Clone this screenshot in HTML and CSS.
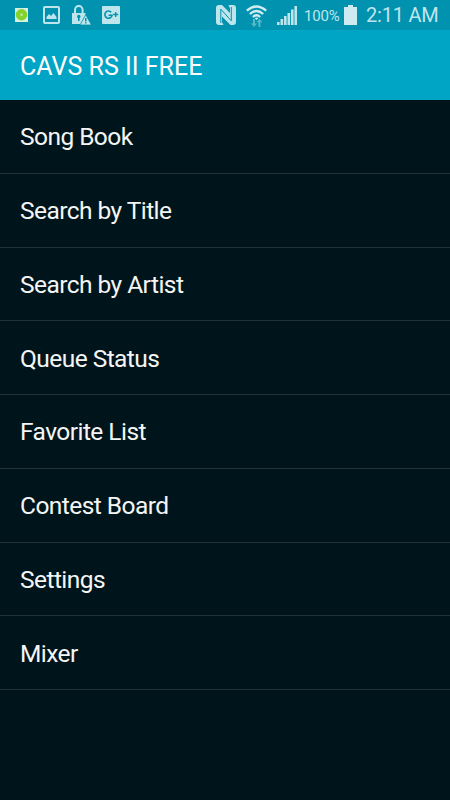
FILE: index.html
```html
<!DOCTYPE html>
<html lang="en">
<head>
  <meta charset="utf-8">
  <meta name="viewport" content="width=device-width, initial-scale=1">
  <title>CAVS RS II FREE</title>
  <link rel="stylesheet" href="styles.css">
</head>
<body>
  <!--status bar-->
  <div class="status-bar">
    <div class="notifications">
      <svg class="icon-app" width="13" height="14" viewBox="0 0 13 14">
        <rect width="13" height="14" fill="#d5f0e0"/>
        <circle cx="6.5" cy="6.7" r="5.7" fill="#84d22c"/>
        <rect x="5.5" y="5.7" width="2" height="2" fill="#d5f0c0"/>
      </svg>
      <svg class="icon-image" width="17" height="18" viewBox="0 0 17 18">
        <rect x="1" y="1" width="15" height="16" rx="1" fill="none" stroke="#bfe5ec" stroke-width="2"/>
        <path d="M3.5 13V11L6 8l2 2 2.5-3 3 4v2z" fill="#bfe5ec"/>
      </svg>
      <svg class="icon-lock" width="19" height="20" viewBox="0 0 19 20">
        <path d="M3 9V5a3.7 4 0 0 1 7.6 0V9" fill="none" stroke="#bfe5ec" stroke-width="2"/>
        <path d="M0 8h13.5v3L9 19H0z" fill="#bfe5ec"/>
        <circle cx="6.8" cy="11.5" r="1.7" fill="#0092af"/>
        <path d="M6 12h1.6v4H6z" fill="#0092af"/>
        <path d="M13.7 9.7L19.5 20H8z" fill="#bfe5ec" stroke="#0092af" stroke-width=".8"/>
        <path d="M13 13h1.5v3.5H13zM13 17.3h1.5v1.3H13z" fill="#0092af"/>
      </svg>
      <svg class="icon-gplus" width="18" height="18" viewBox="0 0 18 18">
        <rect width="18" height="18" rx="1" fill="#bfe5ec"/>
        <path d="M9.2 6.3A3.6 3.6 0 1 0 10 9.3H6.6" fill="none" stroke="#0092af" stroke-width="1.6"/>
        <path d="M13.7 6v5M11.2 8.5h5" stroke="#0092af" stroke-width="1.3"/>
      </svg>
    </div>
    <div class="system">
      <svg class="icon-nfc" width="20" height="20" viewBox="0 0 20 20">
        <path d="M6 0L14 8V3.5L12.5 0H17q3 0 3 3v14q0 3-3 3h-2.5L6 11.5V17l1.5 3H3q-3 0-3-3V3Q0 0 3 0z" fill="#bfe5ec"/>
        <path d="M4.8 18V4.2L15.3 15.8V2" fill="none" stroke="#0092af" stroke-width="1"/>
      </svg>
      <svg class="icon-wifi" width="21" height="23" viewBox="0 0 21 23">
        <g fill="none" stroke="#d2edf2" stroke-width="2.3">
          <path d="M.8 5.7Q10.5-2.8 20.2 5.7"/>
          <path d="M3.8 9Q10.5 3 17.2 9"/>
          <path d="M6.9 12Q10.5 8.6 14.1 12"/>
        </g>
        <path d="M8.8 13.2Q10.5 11.8 12.2 13.2L10.5 15z" fill="#d2edf2"/>
        <path d="M7 14h2v4.5h2L8 22l-3-3.5h2zM12.4 22v-4.8h-2l3-3.4 3 3.4h-2V22z" fill="#59b8ca"/>
      </svg>
      <svg class="icon-signal" width="20" height="19" viewBox="0 0 20 19">
        <path d="M0 16h2.6v3H0zM3.5 13h2.6v6H3.5zM7 10h2.6v9H7zM10.5 7h2.6v12h-2.6zM14 3.5h2.6V19H14zM17.4 0H20v19h-2.6z" fill="#bfe5ec"/>
      </svg>
      <span class="percent">100%</span>
      <svg class="icon-battery" width="13" height="20" viewBox="0 0 13 20">
        <path d="M4 0h5v2h4v18H0V2h4z" fill="#ceebf1"/>
      </svg>
      <span class="clock">2:11 AM</span>
    </div>
  </div>

  <!--title-->
  <header class="app-bar">
    <h1>CAVS RS II FREE</h1>
  </header>

  <!--menu-->
  <ul class="menu">
    <li>Song Book</li>
    <li>Search by Title</li>
    <li>Search by Artist</li>
    <li>Queue Status</li>
    <li>Favorite List</li>
    <li>Contest Board</li>
    <li>Settings</li>
    <li>Mixer</li>
  </ul>
</body>
</html>
```

FILE: styles.css
```css
html, body {
  height: 100%;
  margin: 0;
  padding: 0;
  overflow: hidden;
}
body {
  background-color: #00151b;
  font-family: Roboto, "Liberation Sans", sans-serif;
  color: #fff;
}
svg {
  display: block;
  flex: none;
}
.status-bar {
  display: flex;
  justify-content: space-between;
  height: 30px;
  padding: 0 11px 0 15px;
  box-sizing: border-box;
  background-color: #0092af;
}
.notifications,
.system {
  display: flex;
  align-items: center;
  white-space: nowrap;
}
.icon-image {
  margin-left: 15px;
}
.icon-lock {
  margin-left: 12px;
}
.icon-gplus {
  margin-left: 11px;
}
.icon-wifi {
  margin: 2px 0 0 10px;
}
.icon-signal {
  margin-left: 10px;
}
.percent {
  width: 36px;
  margin: 2px 4px 0 7px;
  font-size: 15px;
  letter-spacing: -0.2px;
  color: #bfe5ec;
}
.clock {
  width: 73px;
  margin-left: 9px;
  font-size: 20px;
  line-height: 32px;
  letter-spacing: -0.2px;
  color: #bfe5ec;
}
.app-bar {
  display: flex;
  align-items: center;
  height: 70px;
  padding: 2px 20px 0;
  box-sizing: border-box;
  background-color: #00a4c5;
}
.app-bar h1 {
  margin: 0;
  font-size: 25px;
  font-weight: 400;
}
.menu {
  list-style-type: none;
  margin: 0;
  padding: 0;
}
.menu li {
  display: flex;
  align-items: center;
  height: 73.75px;
  padding: 1px 20px 0;
  box-sizing: border-box;
  border-bottom: 1px solid #1f3238;
  font-size: 24.5px;
  letter-spacing: -0.55px;
  color: #f5f5f5;
}
```
